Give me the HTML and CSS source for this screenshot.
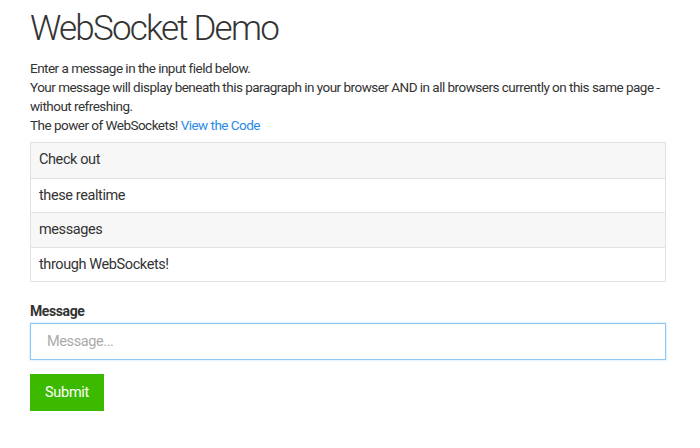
FILE: index.html
```html
<!DOCTYPE html>
<html>
<head>
<meta charset="utf-8">
<link rel="stylesheet" href="styles.css">
</head>
<body>
<main class="page">
  <h1 class="title">WebSocket Demo</h1>
  <p class="intro">Enter a message in the input field below.<br>Your message will display beneath this paragraph in your browser AND in all browsers currently on this same page - without refreshing.<br>The power of WebSockets! <a class="link" href="#">View the Code</a></p>
  <ul class="messages">
    <li class="msg">Check out</li>
    <li class="msg">these realtime</li>
    <li class="msg">messages</li>
    <li class="msg">through WebSockets!</li>
  </ul>
  <form class="form">
    <label class="label" for="m">Message</label>
    <input class="input" id="m" type="text" placeholder="Message...">
    <button class="submit" type="button">Submit</button>
  </form>
</main>
</body>
</html>
```
FILE: styles.css
```css
* { box-sizing: border-box; }
html, body { margin: 0; padding: 0; background: #fff; }
body {
  font-family: Roboto, "Open Sans", sans-serif;
  color: #333;
  font-size: 14px;
  letter-spacing: -0.4px;
}
.page {
  width: 636px;
  margin-left: 30px;
  padding-top: 7px;
}
.title {
  margin: 0;
  font-size: 35px;
  font-weight: 300;
  line-height: 44px;
  color: #333;
  letter-spacing: -1.8px;
}
.intro {
  margin: 8px 0 7px;
  line-height: 19px;
  font-size: 13.5px;
  letter-spacing: -0.52px;
}
.link { color: #2a8be8; text-decoration: none; }
.messages {
  list-style: none;
  margin: 0;
  padding: 0;
  border: 1px solid #e1e1e1;
}
.msg {
  height: 34.5px;
  line-height: 33px;
  padding: 0 8px;
  font-size: 14.5px;
  border-top: 1px solid #e1e1e1;
}
.msg:first-child { border-top: none; }
.msg:nth-child(odd) { background: #f7f7f7; }
.form {
  margin-top: 20px;
  display: flex;
  flex-direction: column;
  align-items: flex-start;
}
.label {
  font-weight: 700;
  font-size: 14px;
  line-height: 18px;
}
.input {
  margin-top: 3px;
  width: 100%;
  height: 37px;
  border: 1px solid #8ec5f7;
  box-shadow: 0 0 2px #b8dbfb;
  padding: 0 16px;
  font: inherit;
  font-size: 14.5px;
  letter-spacing: -0.4px;
  outline: none;
}
.input::placeholder { color: #aaa; }
.submit {
  margin-top: 14px;
  width: 74px;
  height: 37px;
  border: none;
  background: #3cba00;
  color: #fff;
  font: inherit;
  font-size: 14.5px;
  letter-spacing: -0.3px;
  padding: 0;
}
```
